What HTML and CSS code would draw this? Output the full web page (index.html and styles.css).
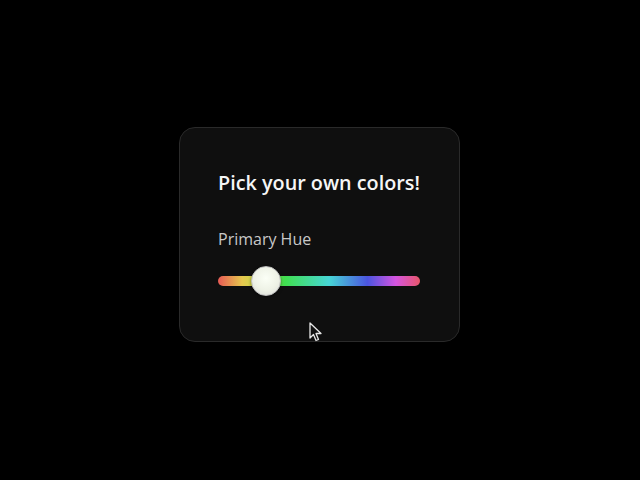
FILE: index.html
```html
<!DOCTYPE html>
<html>
<head>
<meta charset="utf-8">
<link rel="stylesheet" href="styles.css">
</head>
<body>
<div class="stage">
  <div class="card">
    <h1 class="title">Pick your own colors!</h1>
    <div class="label">Primary Hue</div>
    <div class="slider">
      <div class="track"></div>
      <div class="thumb"></div>
    </div>
  </div>
  <svg class="cursor" width="14" height="21" viewBox="0 0 14 21">
    <path d="M1 1 L1 16 L4.5 12.5 L7 18.5 L9.5 17.5 L7 11.5 L12 11.5 Z" fill="#111" stroke="#e6e6e6" stroke-width="1.3" stroke-linejoin="round"/>
  </svg>
</div>
</body>
</html>
```
FILE: styles.css
```css
html, body {
  margin: 0;
  padding: 0;
  background: #000;
  width: 640px;
  height: 480px;
  overflow: hidden;
}
.stage {
  position: relative;
  width: 640px;
  height: 480px;
  display: flex;
  align-items: center;
  justify-content: center;
}
.card {
  box-sizing: border-box;
  width: 281px;
  height: 215px;
  margin: -12px 0 0 -1px;
  background: #0f0f0f;
  border: 1px solid #2a2a2a;
  border-radius: 16px;
  padding: 41px 20px 0 38px;
  font-family: "Open Sans", "Noto Sans", sans-serif;
}
.title {
  margin: 0;
  font-size: 19.8px;
  font-weight: 600;
  color: #f6f6f6;
  line-height: 28px;
  letter-spacing: 0;
  white-space: nowrap;
}
.label {
  margin-top: 31px;
  font-size: 16px;
  font-weight: 500;
  color: #c8c8c8;
  line-height: 22px;
  letter-spacing: 0;
}
.slider {
  position: relative;
  margin-top: 16px;
  width: 202px;
  height: 30px;
  display: flex;
  align-items: center;
}
.track {
  width: 100%;
  height: 10px;
  border-radius: 5px;
  background: linear-gradient(90deg, #e85a55 0%, #e6c84e 12%, #b8e048 22%, #40df4e 33%, #47d6d6 55%, #4b55e0 74%, #d555e0 88%, #e8566a 100%);
}
.thumb {
  position: absolute;
  left: 33px;
  top: 0;
  box-sizing: border-box;
  width: 30px;
  height: 30px;
  border-radius: 50%;
  background: radial-gradient(circle at 50% 40%, #fbfff6 0%, #eef2e6 55%, #d8d8d8 100%);
  border: 1px solid #bfbfbf;
  box-shadow: 0 1px 3px rgba(0,0,0,0.5);
}
.cursor {
  position: absolute;
  left: 309px;
  top: 322px;
}
```
